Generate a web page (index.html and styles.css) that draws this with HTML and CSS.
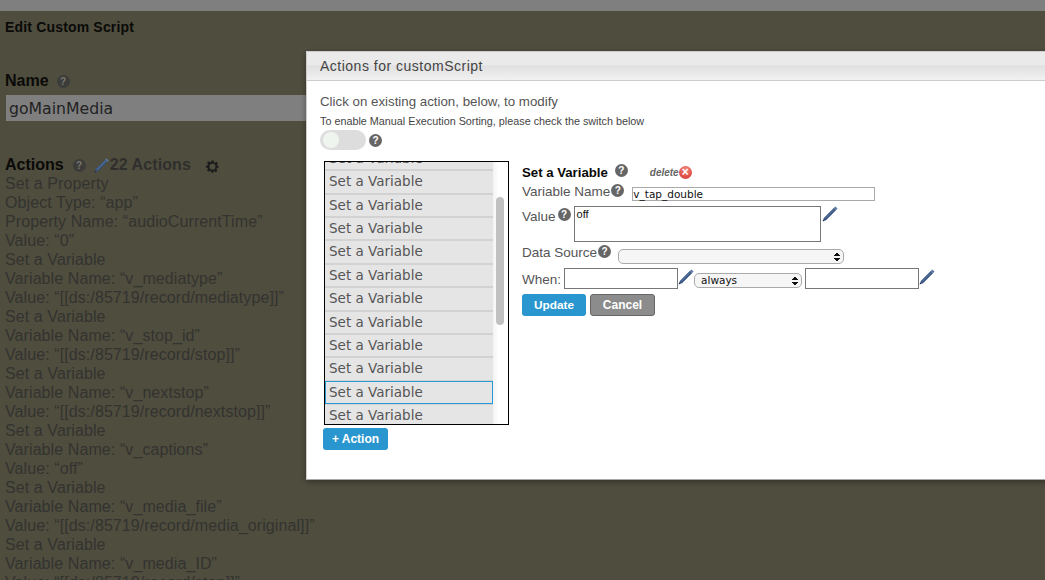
FILE: index.html
```html
<!DOCTYPE html>
<html lang="en">
<head>
<meta charset="utf-8">
<title>Edit Custom Script</title>
<link rel="stylesheet" href="styles.css">
</head>
<body>
<svg class="defs" width="0" height="0" aria-hidden="true">
  <symbol id="pencil" viewBox="0 0 16 16">
    <path d="M1 15 L1.800 12 L12 1.800 L14.200 4 L4 14.200 Z" fill="#34527f"/>
    <path d="M12 1.800 L13.400 .4 L15.600 2.600 L14.200 4 Z" fill="#5d7ba6"/>
    <path d="M.6 15.400 L1.200 13.400 L2.600 14.800 Z" fill="#1d2c44"/>
    <path d="M3 12.600 L12.400 3.200" stroke="#7d97bd" stroke-width=".7" fill="none"/>
  </symbol>
</svg>
<div class="topbar"></div>
<main class="page">
  <h1 class="page-title">Edit Custom Script</h1>
  <div class="name-label">Name <span class="q q-dim">?</span></div>
  <div class="name-input">goMainMedia</div>
  <div class="actions-head">
    <span class="actions-label">Actions</span>
    <span class="q q-dim">?</span>
    <svg class="pencil-dim" width="15" height="15"><use href="#pencil"/></svg>
    <span class="actions-count">22 Actions</span>
    <svg class="gear" width="13" height="13" viewBox="0 0 24 24"><path fill="#1d1d1d" fill-rule="evenodd" d="M10 1h4l.6 3.200 2 .8 2.700-1.800 2.800 2.800-1.800 2.700.8 2L23 10.400v4l-2.900.6-.8 2 1.800 2.700-2.800 2.800-2.700-1.800-2 .8L14 23.500h-4l-.6-2.900-2-.8-2.700 1.800-2.800-2.800 1.800-2.700-.8-2L0 14.400v-4l2.900-.6.8-2L1.900 5.100 4.700 2.300 7.400 4.100l2-.8zM12 7a5.300 5.300 0 1 0 0 10.600A5.300 5.300 0 0 0 12 7z"/></svg>
  </div>
  <div class="script-lines">
    <div>Set a Property</div>
    <div>Object Type: “app”</div>
    <div>Property Name: “audioCurrentTime”</div>
    <div>Value: “0”</div>
    <div>Set a Variable</div>
    <div>Variable Name: “v_mediatype”</div>
    <div>Value: “[[ds:/85719/record/mediatype]]”</div>
    <div>Set a Variable</div>
    <div>Variable Name: “v_stop_id”</div>
    <div>Value: “[[ds:/85719/record/stop]]”</div>
    <div>Set a Variable</div>
    <div>Variable Name: “v_nextstop”</div>
    <div>Value: “[[ds:/85719/record/nextstop]]”</div>
    <div>Set a Variable</div>
    <div>Variable Name: “v_captions”</div>
    <div>Value: “off”</div>
    <div>Set a Variable</div>
    <div>Variable Name: “v_media_file”</div>
    <div>Value: “[[ds:/85719/record/media_original]]”</div>
    <div>Set a Variable</div>
    <div>Variable Name: “v_media_ID”</div>
    <div>Value: “[[ds:/85719/record/stop]]”</div>
  </div>
</main>

<section class="modal">
  <header class="modal-head">Actions for customScript</header>
  <div class="modal-body">
    <p class="hint">Click on existing action, below, to modify</p>
    <p class="hint-small">To enable Manual Execution Sorting, please check the switch below</p>
    <div class="switch-row">
      <span class="switch"><span class="knob"></span></span>
      <span class="q q-modal">?</span>
    </div>
    <div class="columns">
      <div class="list-col">
        <div class="list-box">
          <div class="list-items">
            <div class="item">Set a Variable</div>
            <div class="item">Set a Variable</div>
            <div class="item">Set a Variable</div>
            <div class="item">Set a Variable</div>
            <div class="item">Set a Variable</div>
            <div class="item">Set a Variable</div>
            <div class="item">Set a Variable</div>
            <div class="item">Set a Variable</div>
            <div class="item">Set a Variable</div>
            <div class="item">Set a Variable</div>
            <div class="item item-selected">Set a Variable</div>
            <div class="item">Set a Variable</div>
          </div>
          <div class="scroll-track"><div class="scroll-thumb"></div></div>
        </div>
        <button class="btn btn-blue btn-action">+ Action</button>
      </div>
      <form class="editor">
        <div class="editor-title">
          <span class="editor-name">Set a Variable</span>
          <span class="q q-modal">?</span>
          <span class="delete">delete</span>
          <span class="delete-x">×</span>
        </div>
        <div class="row row-var">
          <span class="label">Variable Name</span><span class="q q-modal q-tight">?</span>
          <span class="var-input">v_tap_double</span>
        </div>
        <div class="row row-value">
          <span class="label">Value</span><span class="q q-modal q-value">?</span>
          <span class="value-box">off</span>
          <svg class="pencil" width="16" height="16"><use href="#pencil"/></svg>
        </div>
        <div class="row row-source">
          <span class="label">Data Source</span><span class="q q-modal q-tight">?</span>
          <span class="select select-source"><span class="select-text"></span><span class="arrows"></span></span>
        </div>
        <div class="row row-when">
          <span class="label">When:</span>
          <span class="when-box"></span>
          <svg class="pencil" width="16" height="16"><use href="#pencil"/></svg>
          <span class="select select-when"><span class="select-text">always</span><span class="arrows"></span></span>
          <span class="when-box"></span>
          <svg class="pencil" width="16" height="16"><use href="#pencil"/></svg>
        </div>
        <div class="row row-buttons">
          <button type="button" class="btn btn-blue btn-update">Update</button>
          <button type="button" class="btn btn-grey">Cancel</button>
        </div>
      </form>
    </div>
  </div>
</section>
</body>
</html>
```
FILE: styles.css
```css
* { box-sizing: border-box; }
html, body { height: 100%; }
body {
  margin: 0;
  height: 580px;
  overflow: hidden;
  background: #4f4d3e;
  font-family: "Liberation Sans", Arial, sans-serif;
  color: #2f2f2d;
}
.defs { position: absolute; }
.topbar { height: 11px; background: #7f7f7f; }
.page { padding: 8px 5px 0; }
.page-title { margin: 0; font-size: 14px; line-height: 17px; font-weight: bold; color: #0a0a08; letter-spacing: .17px; }
.name-label {
  margin-top: 35px;
  font-size: 16px; line-height: 20px; font-weight: bold; color: #0a0a08;
  display: flex; align-items: center; gap: 8px;
}
.name-input {
  margin-top: 4px; margin-left: 1px;
  width: 400px; height: 26px;
  background: #7f7f7f;
  padding: 1px 0 0 3px;
  font-family: "DejaVu Sans", sans-serif;
  font-size: 15.7px; line-height: 26px; color: #222;
}
.actions-head {
  margin-top: 34px;
  height: 20px;
  display: flex; align-items: center;
  font-size: 16px; font-weight: bold;
}
.actions-label { color: #0a0a08; }
.actions-head .q { margin-left: 9px; }
.pencil-dim { margin-left: 8px; }
.actions-count { color: #2f2f2d; margin-left: 1px; letter-spacing: .1px; }
.gear { margin-left: 15px; margin-top: 2px; }
.script-lines { font-size: 16px; line-height: 19px; margin-top: -1px; color: #333330; letter-spacing: .09px; }

.q {
  display: inline-flex; align-items: center; justify-content: center;
  width: 13px; height: 13px; border-radius: 50%;
  font-size: 10px; line-height: 13px; font-weight: bold;
  flex: none;
}
.q-dim { background: #3c3c3a; color: #77776f; }
.q-modal { background: #666; color: #fff; }
.q-tight { margin-left: 1px; }
.q-value { margin-left: 2px; }

.modal {
  position: absolute;
  left: 306px; top: 51px;
  width: 800px; height: 429px;
  background: #fff;
  border-top: 1px solid #ccc;
  border-left: 1px solid #ccc;
  border-bottom: 1px solid #aaa;
  box-shadow: 0 2px 6px rgba(0,0,0,.35);
}
.modal-head {
  height: 29px;
  padding-left: 13px;
  background: linear-gradient(#eaeaea 0, #eaeaea 45%, #e0e0e0 50%, #f1f1f1 100%);
  border-bottom: 1px solid #ccc;
  font-size: 14px; line-height: 28px; color: #444; letter-spacing: .5px;
}
.modal-body { padding: 13px 0 0 13px; color: #555; }
.hint { margin: 0; font-size: 13.3px; line-height: 16px; color: #555; }
.hint-small { margin: 5px 0 0; font-size: 10.8px; line-height: 13px; color: #444; }
.switch-row { margin-top: 2px; height: 20px; display: flex; align-items: center; gap: 3px; }
.switch { width: 46px; height: 20px; border-radius: 10px; background: #ddd; display: block; padding: 2px 3px; }
.knob { display: block; width: 16px; height: 16px; border-radius: 50%; background: #eef4ee; }
.columns { display: flex; margin-top: 11px; margin-left: 4px; }
.list-col { width: 198px; flex: none; }
.list-box {
  width: 185px; height: 264px;
  border: 1px solid #000;
  overflow: hidden;
  display: flex;
}
.list-items { width: 168px; flex: none; margin-top: -15.2px; }
.item {
  height: 23.4px;
  background: #e5e5e5;
  border-top: 1.5px solid #d2d2d2;
  border-bottom: 1.5px solid #d2d2d2;
  padding-left: 4px;
  font-family: "DejaVu Sans", sans-serif;
  font-size: 13.5px; line-height: 20px; color: #555;
}
.item-selected { border: 1px solid #2a9ad6; padding-left: 3px; line-height: 21px; }
.scroll-track { flex: 1; padding: 35px 3px 0 3px; background: linear-gradient(90deg,#f3f3f3,#fff 40%); }
.scroll-thumb { width: 8px; height: 128px; border-radius: 4px; background: #c1c1c1; }
.btn {
  border: 0; border-radius: 3px; padding: 0;
  font-family: "Liberation Sans", Arial, sans-serif;
  font-size: 12px; font-weight: bold; color: #fff; display: block;
}
.btn-blue { background: #2a96cf; }
.btn-grey { background: #8c8c8c; border: 1px solid #666; width: 65px; height: 22px; }
.btn-action { width: 65px; height: 22px; margin-top: 3px; margin-left: -1px; }
.btn-update { width: 64px; height: 22px; font-size: 11.8px; }

.editor { font-size: 13.5px; color: #555; width: 480px; }
.editor-title { height: 21px; display: flex; align-items: center; margin-top: 1px; }
.editor-name { font-weight: bold; font-size: 13.2px; color: #0a0a08; }
.editor-title .q { margin-left: 7px; position: relative; top: -2px; }
.delete { margin-left: 22px; font-size: 10px; font-style: italic; font-weight: bold; color: #666; }
.delete-x {
  width: 13px; height: 13px; border-radius: 50%;
  background: radial-gradient(circle at 50% 30%, #f58a80, #dd4a42 70%); color: #fff; font-size: 12px; line-height: 13px; font-weight: bold; text-align: center;
}
.row { display: flex; align-items: flex-start; }
.label { line-height: 18px; }
.row .q { margin-top: 1px; }
.row-var { height: 20px; }
.var-input {
  margin-left: 8px; margin-top: 4px;
  width: 243px; height: 14px;
  border: 1px solid #aaa;
  font-family: "DejaVu Sans", sans-serif; font-size: 10.5px; line-height: 13px; color: #111; padding-left: 0;
}
.row-value { height: 40px; margin-top: 3px; }
.row-value .label, .row-value .q { margin-top: 2px; }
.value-box {
  margin-left: 3px;
  width: 247px; height: 36px;
  border: 1px solid #777;
  font-size: 11px; line-height: 13px; color: #111; padding: 1px 2px;
}
.pencil { margin-left: 1px; flex: none; }
.row-source { height: 21px; margin-top: -2px; }
.select-source { margin-left: 7px; margin-top: 5px; width: 226px; height: 15px; }
.select {
  display: flex; align-items: center; justify-content: space-between;
  border: 1px solid #aaa; border-radius: 5px; background: #f6f6f6;
  padding: 0 3px 0 6px; flex: none;
}
.select-text { font-family: "DejaVu Sans", sans-serif; font-size: 10.5px; color: #111; line-height: 13px; }
.arrows {
  width: 6px; height: 10px; flex: none;
  background:
    linear-gradient(135deg, transparent 50%, #111 50%) 0 0/3px 4px no-repeat,
    linear-gradient(225deg, transparent 50%, #111 50%) 3px 0/3px 4px no-repeat,
    linear-gradient(45deg, transparent 50%, #111 50%) 0 6px/3px 4px no-repeat,
    linear-gradient(315deg, transparent 50%, #111 50%) 3px 6px/3px 4px no-repeat;
}
.row-when { height: 26px; margin-top: 3px; }
.row-when .label { margin-top: 3px; }
.row-when .pencil { margin-top: 1px; margin-left: 0; }
.when-box { width: 114px; height: 21px; border: 1px solid #777; margin-left: 3px; flex: none; }
.select-when { width: 108px; height: 15px; margin-left: 0; margin-top: 5px; }
.select-when + .when-box { margin-left: 3px; }
.row-buttons { gap: 4px; }
```
